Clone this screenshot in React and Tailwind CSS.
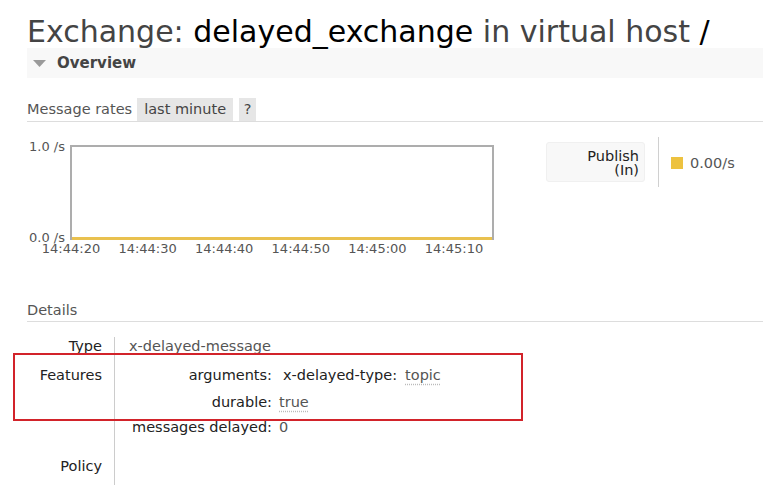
export default function App() {
  const ticks = [
    { t: "14:44:20", x: 44 },
    { t: "14:44:30", x: 120.6 },
    { t: "14:44:40", x: 197.2 },
    { t: "14:44:50", x: 273.8 },
    { t: "14:45:00", x: 350.4 },
    { t: "14:45:10", x: 427 },
  ];
  return (
    <div className="relative w-[763px] h-[492px] overflow-hidden bg-white pl-[27px] font-['DejaVu_Sans',Verdana,sans-serif] text-[#222]">
      {/* Title */}
      <div className="h-[48px] pt-[17px] text-[30px] leading-[29px] text-[#444] whitespace-nowrap">
        Exchange: <span className="text-black">delayed_exchange</span> in virtual host <span className="text-black">/</span>
      </div>

      {/* Overview bar */}
      <div className="h-[30px] bg-[#f8f8f8] flex items-center">
        <svg width="13" height="7" viewBox="0 0 13 7" className="ml-[6px]">
          <polygon points="0,0 13,0 6.5,7" fill="#9a9a9a" />
        </svg>
        <span className="ml-[11px] text-[15px] font-bold text-[#444] leading-[18px]">Overview</span>
      </div>

      {/* Message rates */}
      <div className="mt-[20px] flex items-end border-b border-[#dddddd] text-[14.5px] leading-[23px]">
        <span className="text-[#555]">Message rates</span>
        <span className="ml-[5px] h-[23px] px-[7px] bg-[#e6e6e6] text-[#444]">last minute</span>
        <span className="ml-[6px] h-[23px] w-[17px] text-center bg-[#e6e6e6] text-[#444]">?</span>
      </div>

      {/* Chart + legend */}
      <div className="flex items-start">
        <div className="relative w-[470px] h-[135px] text-[13px] leading-[16px] text-[#555]">
          <div className="absolute left-0 w-[38px] text-right top-[16.5px] whitespace-nowrap">1.0 /s</div>
          <div className="absolute left-0 w-[38px] text-right top-[107.5px] whitespace-nowrap">0.0 /s</div>
          <div className="absolute left-[43px] top-[23px] w-[424px] h-[95px] border-l-2 border-t-2 border-r-2 border-[#adadad]">
            <div className="absolute left-0 right-0 bottom-0 h-[3px] bg-[#e9c14f]" />
          </div>
          {ticks.map((k) => (
            <div
              key={k.t}
              className="absolute top-[118.5px] -translate-x-1/2 whitespace-nowrap"
              style={{ left: k.x }}
            >
              {k.t}
            </div>
          ))}
        </div>
        <div className="ml-[49px] mt-[20px] w-[99px] h-[40px] rounded-[3px] bg-[#f8f8f8] border border-[#f0f0f0] text-right pr-[5px] pt-[6px] text-[14.5px] leading-[14px] text-[#222]">
          Publish
          <br />
          (In)
        </div>
        <div className="ml-[13px] mt-[15px] w-px h-[50px] bg-[#d0d0d0]" />
        <div className="ml-[12px] mt-[35px] w-[12px] h-[12px] bg-[#edc240]" />
        <div className="ml-[7px] mt-[33px] text-[14.5px] leading-[16px] text-[#555]">0.00/s</div>
      </div>

      {/* Details */}
      <div className="mt-[45px] pb-[3px] border-b border-[#dddddd] text-[14.5px] leading-[16px] text-[#555]">Details</div>

      <div className="mt-[15px] grid grid-cols-[88px_1fr] text-[14.5px] leading-[16px]">
        {/* Type */}
        <div className="border-r border-[#cccccc] text-right pr-[12px] pt-[1px] pb-[13px] text-[#222]">Type</div>
        <div className="pl-[14px] pt-[1px] text-[#555]">x-delayed-message</div>

        {/* Features */}
        <div className="border-r border-[#cccccc] text-right pr-[12px] text-[#222]">Features</div>
        <div className="pl-[16px] pb-[23px]">
          <div className="grid grid-cols-[141px_1fr] gap-x-[7px]">
            <div className="text-right text-[#222] h-[27px]">arguments:</div>
            <div className="flex pl-[4px]">
              <span className="text-[#222]">x-delayed-type:</span>
              <span className="ml-[8px] text-[#555] underline decoration-dotted decoration-[#bbb] underline-offset-[4px]">topic</span>
            </div>
            <div className="text-right text-[#222] h-[25px]">durable:</div>
            <div>
              <span className="text-[#555] underline decoration-dotted decoration-[#bbb] underline-offset-[4px]">true</span>
            </div>
            <div className="text-right text-[#222] whitespace-nowrap">messages delayed:</div>
            <div className="text-[#555]">0</div>
          </div>
        </div>

        {/* Policy */}
        <div className="border-r border-[#cccccc] text-right pr-[12px] pb-[11px] text-[#222]">Policy</div>
        <div />
      </div>

      {/* Red annotation box */}
      <div className="absolute left-[13px] top-[353px] w-[510px] h-[68px] border-2 border-[#d2232a]" />
    </div>
  );
}
